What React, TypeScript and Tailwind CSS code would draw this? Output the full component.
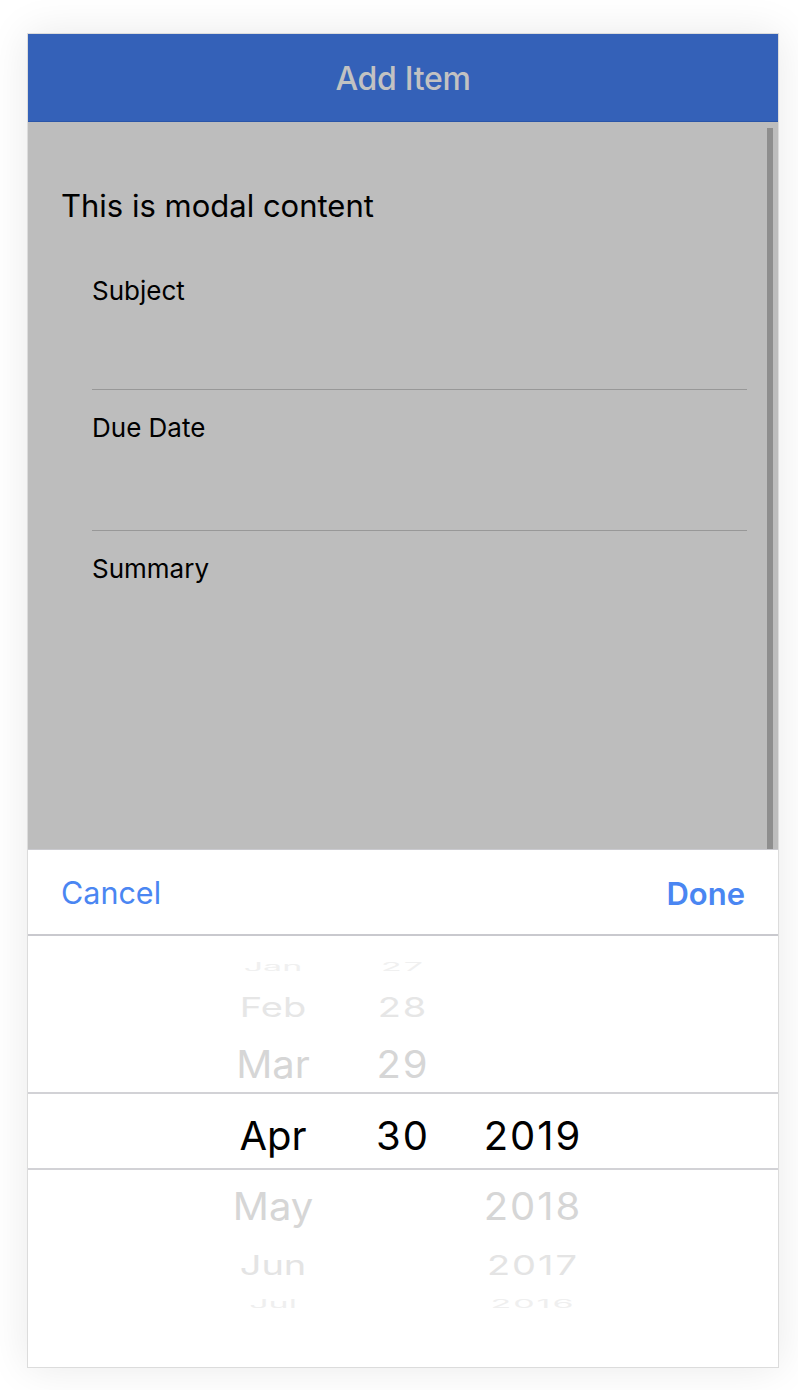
import React from "react";

const font = { fontFamily: "Inter, 'Noto Sans', sans-serif" };

function Row({ h, cls, items, scale }: { h: string; cls: string; items: string[]; scale: string }) {
  return (
    <div className={`flex items-center justify-center ${h}`}>
      <div className={`grid grid-cols-[130px_130px_130px] ${scale}`}>
        {items.map((t, i) => (
          <div key={i} className={`text-center leading-none ${cls} ${i > 0 ? "tracking-[2px]" : ""}`}>
            {t}
          </div>
        ))}
      </div>
    </div>
  );
}

export default function App() {
  return (
    <div className="min-h-[1390px] w-[798px] bg-white pt-[33px] pb-[22px]" style={font}>
      <div className="ml-[27px] flex h-[1335px] w-[752px] flex-col border border-[#dcdcdc] shadow-[0_0_40px_rgba(0,0,0,0.09)]">
        <div className="flex h-[88px] items-center justify-center border-b border-[#2a55a8] bg-[#3461b8]">
          <span className="mt-[2px] text-[32px] font-medium leading-none tracking-[-0.3px] text-[#c2c2c2]">Add Item</span>
        </div>
        <div className="relative flex h-[727px] flex-col bg-[#bdbdbd]">
          <div className="absolute right-[5px] top-[6px] bottom-0 w-[6px] bg-[#8e8e8e]" />
          <div className="pl-[33px] pt-[68px] text-[31px] leading-none text-black">This is modal content</div>
          <div className="ml-[64px] mr-[31px] mt-[57px] flex flex-col">
            <div className="text-[26px] leading-none text-black">Subject</div>
            <div className="mt-[85px] h-px bg-[#989898]" />
            <div className="mt-[25px] text-[26px] leading-none text-black">Due Date</div>
            <div className="mt-[89px] h-px bg-[#989898]" />
            <div className="mt-[25px] text-[26px] leading-none text-black">Summary</div>
          </div>
        </div>
        <div className="flex flex-1 flex-col border-t border-[#c9c9ce] bg-white">
          <div className="flex h-[86px] items-center justify-between border-b-2 border-[#c9c9ce] px-[33px] pt-[3px]">
            <span className="text-[30.5px] leading-none text-[#4a86f2]">Cancel</span>
            <span className="text-[31px] font-semibold leading-none text-[#4a86f2]">Done</span>
          </div>
          <div className="relative flex flex-col pt-[11px]">
            <div className="absolute left-0 right-0 top-[156px] h-[2px] bg-[#d2d2d6]" />
            <div className="absolute left-0 right-0 top-[232px] h-[2px] bg-[#d2d2d6]" />
            <Row h="h-[40px]" cls="text-[34px] text-[#f0f0f0]" scale="scale-y-[0.35]" items={["Jan", "27", ""]} />
            <Row h="h-[40px]" cls="text-[38px] text-[#e6e6e6]" scale="scale-y-[0.72]" items={["Feb", "28", ""]} />
            <Row h="h-[76px]" cls="text-[40px] text-[#d6d6d6]" scale="scale-y-[0.95]" items={["Mar", "29", ""]} />
            <Row h="h-[66px]" cls="text-[40px] text-black" scale="" items={["Apr", "30", "2019"]} />
            <Row h="h-[76px]" cls="text-[40px] text-[#d6d6d6]" scale="scale-y-[0.95]" items={["May", "", "2018"]} />
            <Row h="h-[40px]" cls="text-[38px] text-[#e4e4e4]" scale="scale-y-[0.72]" items={["Jun", "", "2017"]} />
            <Row h="h-[38px]" cls="text-[34px] text-[#efefef]" scale="scale-y-[0.35]" items={["Jul", "", "2016"]} />
          </div>
        </div>
      </div>
    </div>
  );
}
